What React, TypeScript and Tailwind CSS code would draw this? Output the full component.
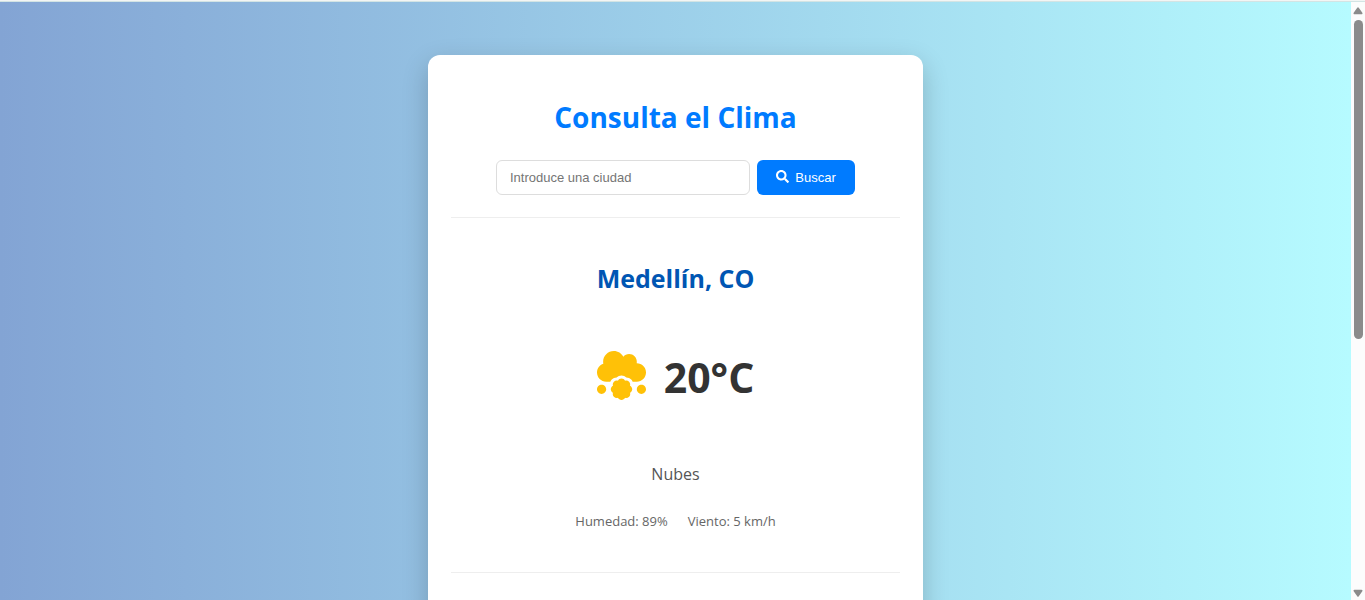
import { FaCloudMeatball, FaSearch } from "react-icons/fa";

function SearchForm() {
  return (
    <form
      className="mt-5 flex justify-center gap-[7px] font-['Liberation_Sans',sans-serif] text-[13px]"
      onSubmit={(event) => event.preventDefault()}
    >
      <input
        type="text"
        aria-label="Ciudad"
        placeholder="Introduce una ciudad"
        className="h-[35px] w-[254px] rounded-md border border-[#dddddd] bg-white px-[13px] placeholder:text-[#757575]"
      />
      <button
        type="submit"
        className="flex h-[35px] w-[98px] items-center justify-center gap-[6px] rounded-md bg-[#007bff] text-white"
      >
        <FaSearch className="mb-[2px] size-[13px]" />
        Buscar
      </button>
    </form>
  );
}

function CurrentWeather() {
  return (
    <section className="mt-[22px] border-y border-[#eeeeee] text-center">
      <h2 className="mt-10 text-[25px] leading-10 font-bold text-[#0056b3]">Medellín, CO</h2>
      <div className="mt-12 flex items-center justify-center gap-[18px]">
        <FaCloudMeatball className="mb-1 size-[49px] text-[#ffc107]" />
        <p className="text-[41px] leading-[62px] font-bold text-[#333333]">20°C</p>
      </div>
      <p className="mt-[54px] text-[16px] leading-6 text-[#555555]">Nubes</p>
      <div className="mt-[25px] mb-[41px] flex justify-center gap-5 text-[13px] leading-5 text-[#666666]">
        <p>Humedad: 89%</p>
        <p>Viento: 5 km/h</p>
      </div>
    </section>
  );
}

function ScrollRail() {
  return (
    <div aria-hidden="true" className="flex w-[14px] shrink-0 flex-col items-center bg-[#fcfcfc] pt-[5px] pb-[3px]">
      <svg viewBox="0 0 10 8" className="h-2 w-[10px] fill-[#8b8b8b]">
        <path d="M4.2.7a1 1 0 0 1 1.6 0l3.5 5A1 1 0 0 1 8.5 7.3h-7A1 1 0 0 1 .7 5.700z" />
      </svg>
      <div className="mt-[5px] h-[54%] w-[9px] rounded-full bg-[#8b8b8b]" />
      <svg viewBox="0 0 10 8" className="mt-auto h-2 w-[10px] fill-[#8b8b8b]">
        <path d="M4.200 7.300a1 1 0 0 0 1.600 0l3.500-5A1 1 0 0 0 8.500.7h-7A1 1 0 0 0 .7 2.300z" />
      </svg>
    </div>
  );
}

export default function App() {
  return (
    <div className="flex h-screen flex-col overflow-hidden font-['Open_Sans','Noto_Sans',sans-serif]">
      <div className="h-px shrink-0 bg-[#f3f5f4]" />
      <div className="h-px shrink-0 bg-[#d3e4e4]" />
      <div className="flex min-h-0 flex-1">
        <main className="flex-1 overflow-hidden bg-linear-to-r/srgb from-[#83a4d4] to-[#b6fbff] pt-[53px]">
          <div className="mx-auto min-h-screen max-w-[495px] rounded-xl bg-white px-[23px] pt-10 pb-10 shadow-[0_9px_27px_rgba(0,0,0,0.2)]">
            <h1 className="text-center text-[28px] leading-[45px] font-bold text-[#007bff]">Consulta el Clima</h1>
            <SearchForm />
            <CurrentWeather />
          </div>
        </main>
        <ScrollRail />
      </div>
    </div>
  );
}
